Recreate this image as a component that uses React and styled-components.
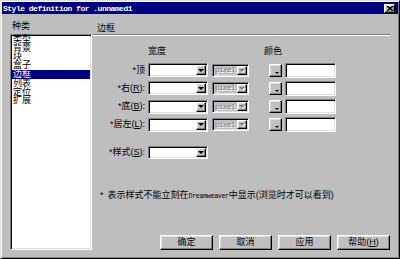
import React from "react";
import styled, { createGlobalStyle } from "styled-components";

const GlobalStyle = createGlobalStyle`
  html, body {
    margin: 0;
    padding: 0;
    background: #c0c0c0;
  }
  body {
    font-family: "Liberation Sans", "Noto Sans CJK SC", sans-serif;
  }
  * {
    box-sizing: border-box;
  }
`;

const sunken = `
  border-style: solid;
  border-width: 1px;
  border-color: #808080 #fff #fff #808080;
  box-shadow: inset 1px 1px 0 #000, inset -1px -1px 0 #dfdfdf;
`;

const raised = `
  border-style: solid;
  border-width: 1px;
  border-color: #fff #000 #000 #fff;
  box-shadow: inset -1px -1px 0 #808080, inset 1px 1px 0 #dfdfdf;
`;

const Window = styled.div`
  width: 400px;
  height: 259px;
  display: flex;
  flex-direction: column;
  padding: 1px;
  background: #c0c0c0 repeating-conic-gradient(#c4c4c4 0 25%, #b8b8b8 0 50%) 0 0 / 2px 2px;
  border: 1px solid;
  border-color: #dfdfdf #000 #000 #dfdfdf;
  box-shadow: inset 1px 1px 0 #fff, inset -1px -1px 0 #808080;
  font-size: 9px;
  color: #000;
`;

const TitleBar = styled.div`
  height: 12px;
  display: flex;
  align-items: center;
  justify-content: space-between;
  padding: 0 3px 0 1px;
  background: #000080;
  color: #fff;
  font-family: "Liberation Mono", monospace;
  font-weight: bold;
  font-size: 8px;
  letter-spacing: -0.5px;
  white-space: pre;
`;

const CloseButton = styled.div`
  width: 11px;
  height: 9px;
  ${raised};
  background: #c0c0c0;
  display: flex;
  align-items: center;
  justify-content: center;
`;

const Body = styled.div`
  flex: 1;
  display: flex;
`;

const Sidebar = styled.div`
  width: 82px;
  margin-left: 8px;
  padding-top: 8px;
  display: flex;
  flex-direction: column;
`;

const Caption = styled.div`
  height: 9px;
  line-height: 9px;
  padding-left: ${p => p.$indent || 0}px;
  white-space: nowrap;
`;

const ListBox = styled.div`
  margin-top: 3px;
  height: 216px;
  ${sunken};
  background: #fff;
  padding: 0 1px;
`;

const ListItem = styled.div`
  height: 8.75px;
  line-height: 8.75px;
  padding-left: 1px;
  white-space: nowrap;
  background: ${p => (p.$selected ? "#000080" : "transparent")};
  color: ${p => (p.$selected ? "#fff" : "#000")};
`;

const Main = styled.div`
  width: 297px;
  margin-left: 1px;
  padding-top: 10px;
  display: flex;
  flex-direction: column;
`;

const Divider = styled.div`
  margin-top: 1px;
  height: 2px;
  border-top: 1px solid #808080;
  border-bottom: 1px solid #fff;
`;

const HeadRow = styled.div`
  margin-top: 11px;
  height: 9px;
  line-height: 9px;
  display: flex;
`;

const HeadCell = styled.div`
  width: ${p => p.$w}px;
  white-space: nowrap;
`;

const Rows = styled.div`
  margin-top: 7px;
  display: flex;
  flex-direction: column;
  gap: 4.33px;
`;

const Row = styled.div`
  height: 14px;
  display: flex;
  align-items: center;
  margin-top: ${p => p.$top || 0}px;
`;

const Label = styled.div`
  width: 53px;
  padding-right: 1px;
  text-align: right;
  white-space: nowrap;
  line-height: 9px;

  u {
    text-decoration: underline;
  }
`;

const Select = styled.div`
  width: 60px;
  height: ${p => p.$h || 14}px;
  margin-left: 2px;
  ${sunken};
  background: #fff;
  display: flex;
  justify-content: flex-end;
  padding: 1px;
`;

const ArrowButton = styled.div`
  width: 10px;
  height: 100%;
  ${raised};
  background: #c0c0c0;
  display: flex;
  align-items: center;
  justify-content: center;
`;

const Arrow = styled.span`
  width: 0;
  height: 0;
  border-left: 3px solid transparent;
  border-right: 3px solid transparent;
  border-top: 3px solid ${p => (p.$dim ? "#808080" : "#000")};
  filter: ${p => (p.$dim ? "drop-shadow(1px 1px 0 #fff)" : "none")};
`;

const UnitSelect = styled.div`
  width: 37px;
  height: 13px;
  margin-left: 4px;
  ${sunken};
  background: #c0c0c0;
  display: flex;
  align-items: center;
  justify-content: space-between;
  padding: 1px 1px 1px 2px;
`;

const UnitText = styled.span`
  font-family: "Liberation Mono", monospace;
  font-size: 7.5px;
  letter-spacing: -0.5px;
  color: #808080;
  text-shadow: 1px 1px 0 #fff;
`;

const Swatch = styled.div`
  width: 13px;
  height: 13px;
  margin-left: 20px;
  ${raised};
  background: #c0c0c0;
  display: flex;
  align-items: flex-end;
  justify-content: flex-end;
  padding: 0 2px 2px 0;
`;

const SwatchArrow = styled.span`
  width: 0;
  height: 0;
  border-left: 2px solid transparent;
  border-right: 2px solid transparent;
  border-top: 2px solid #000;
`;

const ColorInput = styled.div`
  width: 51px;
  height: 15px;
  margin-left: 3px;
  ${sunken};
  background: #fff;
`;

const Note = styled.div`
  margin-top: 31px;
  padding-left: 7px;
  height: 9px;
  line-height: 9px;
  white-space: nowrap;
  display: flex;
  gap: 4px;
`;

const Mono = styled.span`
  font-family: "Liberation Mono", monospace;
  font-size: 6.6px;
  letter-spacing: -0.3px;
`;

const Buttons = styled.div`
  margin-top: 35px;
  display: flex;
  justify-content: flex-end;
  gap: 6px;
`;

const Button = styled.div`
  width: 53px;
  height: 15px;
  ${raised};
  background: #c0c0c0;
  display: flex;
  align-items: center;
  justify-content: center;
  line-height: 9px;
`;

const categories = ["类型", "背景", "块", "盒子", "边框", "列表", "定位", "扩展"];

const sides = [
  { label: "*顶", key: null },
  { label: "*右", key: "R" },
  { label: "*底", key: "B" },
  { label: "*居左", key: "L" },
];

const Mnemonic = ({ k }) => (
  <>
    (<u>{k}</u>):
  </>
);

export default function App() {
  return (
    <>
      <GlobalStyle />
      <Window>
        <TitleBar>
          <span>Style definition for .unnamed1</span>
          <CloseButton>
            <svg width="6" height="5" viewBox="0 0 6 5">
              <path d="M0 0L6 5M6 0L0 5" stroke="#000" strokeWidth="1.4" />
            </svg>
          </CloseButton>
        </TitleBar>
        <Body>
          <Sidebar>
            <Caption $indent={2}>种类</Caption>
            <ListBox>
              {categories.map(c => (
                <ListItem key={c} $selected={c === "边框"}>
                  {c}
                </ListItem>
              ))}
            </ListBox>
          </Sidebar>
          <Main>
            <Caption $indent={4}>边框</Caption>
            <Divider />
            <HeadRow>
              <HeadCell $w={55} />
              <HeadCell $w={116}>宽度</HeadCell>
              <HeadCell $w={40}>颜色</HeadCell>
            </HeadRow>
            <Rows>
              {sides.map(s => (
                <Row key={s.label}>
                  <Label>
                    {s.label}
                    {s.key && <Mnemonic k={s.key} />}
                  </Label>
                  <Select>
                    <ArrowButton>
                      <Arrow />
                    </ArrowButton>
                  </Select>
                  <UnitSelect>
                    <UnitText>pixel</UnitText>
                    <ArrowButton>
                      <Arrow $dim />
                    </ArrowButton>
                  </UnitSelect>
                  <Swatch>
                    <SwatchArrow />
                  </Swatch>
                  <ColorInput />
                </Row>
              ))}
            </Rows>
            <Row $top={14}>
              <Label>
                *样式<Mnemonic k="S" />
              </Label>
              <Select $h={13}>
                <ArrowButton>
                  <Arrow />
                </ArrowButton>
              </Select>
            </Row>
            <Note>
              <span>*</span>
              <span>
                表示样式不能立刻在<Mono>Dreamweaver</Mono>中显示(浏览时才可以看到)
              </span>
            </Note>
            <Buttons>
              <Button>确定</Button>
              <Button>取消</Button>
              <Button>应用</Button>
              <Button>
                帮助<span>(<u>H</u>)</span>
              </Button>
            </Buttons>
          </Main>
        </Body>
      </Window>
    </>
  );
}
